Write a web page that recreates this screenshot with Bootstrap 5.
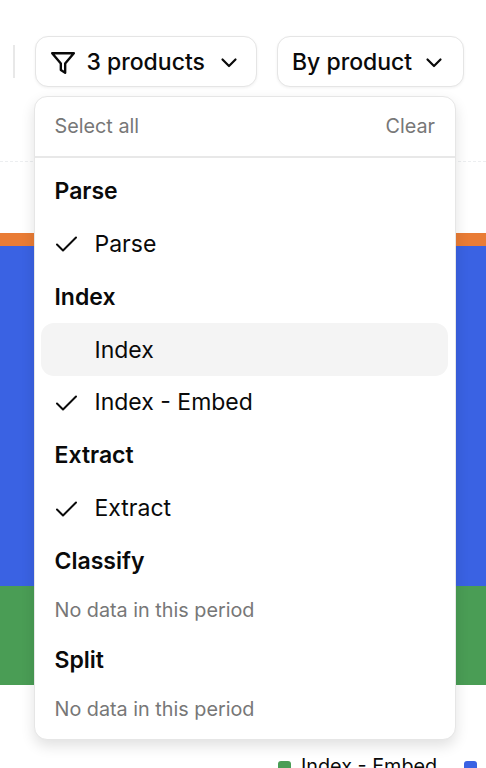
<!DOCTYPE html>
<html lang="en">
<head>
<meta charset="utf-8">
<title>Usage</title>
<link href="https://cdn.jsdelivr.net/npm/bootstrap@5.3.0/dist/css/bootstrap.min.css" rel="stylesheet">
<style>
html,body{height:100%;margin:0;overflow:hidden}
body{font-family:Inter,"Liberation Sans",sans-serif;color:#0a0a0a;background:#fff}
.stage{position:relative;height:768px;overflow:hidden}
.toolbar{padding-top:36px;height:87px;gap:20px;padding-left:35px}
.vsep{position:absolute;left:13px;top:45px;width:2px;height:33px;background:#e8e8e8}
.pick-btn{height:51px;border:1.5px solid #e5e5e5;border-radius:13px;background:#fff;font-size:23px;font-weight:500;color:#0a0a0a;box-shadow:0 1px 3px rgba(0,0,0,.06);padding:2px 0 0;letter-spacing:0}
.pick-a{width:222px;gap:10.5px;padding-left:14px}
.pick-b{width:187px;gap:12px;padding-left:14px}
.grid-dash{margin-top:74px;border-top:1.5px dashed #eceef0;height:0}
.bar-o{margin-top:71px;height:13px;background:#e97c35}
.bar-b{height:340px;background:#3a62e3}
.bar-g{height:99px;background:#4a9d55}
.legend{position:absolute;left:278px;top:754px;gap:27px;font-size:19.8px;line-height:24px;white-space:nowrap}
.swatch{width:13px;height:13px;border-radius:3px;display:inline-block;margin-right:10px;vertical-align:-1px}
.swatch-end{margin-right:0}
.pop{position:absolute;left:34px;top:96px;width:422px;height:644px;background:#fff;border:1px solid #e6e6e6;border-radius:13px;box-shadow:0 6px 14px rgba(0,0,0,.12)}
.pop-head{height:61px;border-bottom:2px solid #e8e8e8;padding:0 20px 0 19.5px;font-size:19.8px;color:#777}
.pop-body{padding:6px 7px 0 6px}
.grp{height:53px;padding:1px 0 0 13.5px;font-size:23px;font-weight:600;display:flex;align-items:center}
.opt{height:53px;border-radius:13px;padding:1px 0 0 13.5px;font-size:23px;display:flex;align-items:center;font-weight:400}
.opt.hov{background:#f4f4f4}
.grp.lower,.opt.lower{padding-top:0}
.tick{width:40px;flex:none;display:flex;align-items:center}
.none{height:47px;padding-left:13.5px;font-size:19.8px;color:#777;display:flex;align-items:center}
.grp.tight{height:52px;padding-top:0}
</style>
</head>
<body>
<div class="stage">
  <div class="vsep"></div>
  <div class="toolbar d-flex">
    <button type="button" class="btn pick-btn pick-a d-flex align-items-center">
      <svg width="26" height="26" viewBox="0 0 24 24" fill="none" stroke="#0a0a0a" stroke-width="2.2" stroke-linecap="round" stroke-linejoin="round"><path d="M2 3h20l-8 9.5V21l-4-2.5v-6z"/></svg>
      <span>3 products</span>
      <svg class="ms-1" width="20" height="20" viewBox="0 0 20 20" fill="none" stroke="#0a0a0a" stroke-width="2.2" stroke-linecap="round" stroke-linejoin="round"><path d="M3.5 6.5 10 13l6.5-6.5"/></svg>
    </button>
    <button type="button" class="btn pick-btn pick-b d-flex align-items-center">
      <span>By product</span>
      <svg width="20" height="20" viewBox="0 0 20 20" fill="none" stroke="#0a0a0a" stroke-width="2.2" stroke-linecap="round" stroke-linejoin="round"><path d="M3.5 6.5 10 13l6.5-6.5"/></svg>
    </button>
  </div>
  <div class="grid-dash"></div>
  <div class="bar-o"></div>
  <div class="bar-b"></div>
  <div class="bar-g"></div>
  <div class="legend d-flex">
    <span><i class="swatch" style="background:#4a9d55"></i>Index - Embed</span>
    <span><i class="swatch swatch-end" style="background:#3a62e3"></i></span>
  </div>
  <div class="pop">
    <div class="pop-head d-flex justify-content-between align-items-center">
      <span>Select all</span><span>Clear</span>
    </div>
    <div class="pop-body">
      <div class="grp">Parse</div>
      <div class="opt"><span class="tick"><svg width="22" height="22" viewBox="0 0 22 22" fill="none" stroke="#0a0a0a" stroke-width="2" stroke-linecap="round" stroke-linejoin="round"><path d="M2 11.5 8 17.5 21 4.5"/></svg></span>Parse</div>
      <div class="grp">Index</div>
      <div class="opt hov"><span class="tick"></span>Index</div>
      <div class="opt lower"><span class="tick"><svg width="22" height="22" viewBox="0 0 22 22" fill="none" stroke="#0a0a0a" stroke-width="2" stroke-linecap="round" stroke-linejoin="round"><path d="M2 11.5 8 17.5 21 4.5"/></svg></span>Index - Embed</div>
      <div class="grp lower">Extract</div>
      <div class="opt lower"><span class="tick"><svg width="22" height="22" viewBox="0 0 22 22" fill="none" stroke="#0a0a0a" stroke-width="2" stroke-linecap="round" stroke-linejoin="round"><path d="M2 11.5 8 17.5 21 4.5"/></svg></span>Extract</div>
      <div class="grp tight">Classify</div>
      <div class="none">No data in this period</div>
      <div class="grp tight">Split</div>
      <div class="none">No data in this period</div>
    </div>
  </div>
</div>
<script src="https://cdn.jsdelivr.net/npm/bootstrap@5.3.0/dist/js/bootstrap.bundle.min.js"></script>
</body>
</html>
